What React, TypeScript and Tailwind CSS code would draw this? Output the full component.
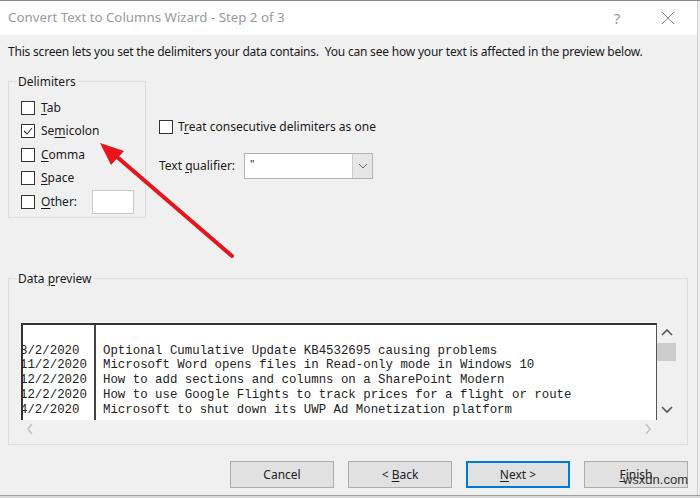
import React from "react";

const ui = { fontFamily: '"Noto Sans", "Open Sans", sans-serif' };
const mono = { fontFamily: '"Liberation Mono", "Courier New", monospace' };

function Box({ checked = false }: { checked?: boolean }) {
  return (
    <span className="w-[14px] h-[14px] border border-[#333] bg-white flex items-center justify-center shrink-0">
      {checked && (
        <svg width="10" height="10" viewBox="0 0 10 10">
          <path d="M1 5 L4 8 L9 2" fill="none" stroke="#333" strokeWidth="1.1" />
        </svg>
      )}
    </span>
  );
}

function Key({ pre = "", k, post = "" }: { pre?: string; k: string; post?: string }) {
  return (
    <span>
      {pre}
      <span className="underline underline-offset-2">{k}</span>
      {post}
    </span>
  );
}

function Check({ label, checked }: { label: React.ReactNode; checked?: boolean }) {
  return (
    <div className="flex items-center gap-[6px] h-[23.5px]">
      <Box checked={checked} />
      {label}
    </div>
  );
}

function Btn({ children, primary }: { children: React.ReactNode; primary?: boolean }) {
  return (
    <button
      className={
        "w-[104px] h-[27px] bg-[#e1e1e1] text-[12px] text-[#222] flex items-center justify-center " +
        (primary ? "border-2 border-[#0078d7]" : "border border-[#adadad]")
      }
    >
      {children}
    </button>
  );
}

const rows = [
  ["3/2/2020", "Optional Cumulative Update KB4532695 causing problems"],
  ["11/2/2020", "Microsoft Word opens files in Read-only mode in Windows 10"],
  ["12/2/2020", "How to add sections and columns on a SharePoint Modern"],
  ["12/2/2020", "How to use Google Flights to track prices for a flight or route"],
  ["4/2/2020", "Microsoft to shut down its UWP Ad Monetization platform"],
];

const Chev = ({ d }: { d: string }) => (
  <svg width="12" height="8" viewBox="0 0 12 8">
    <path d={d} fill="none" stroke="#555" strokeWidth="1.6" />
  </svg>
);

export default function App() {
  return (
    <div
      className="w-[700px] h-[498px] relative overflow-hidden bg-[#f0f0f0] text-[#1a1a1a] border-t border-[#8a8a8a]"
      style={ui}
    >
      {/* title bar */}
      <div className="h-[34px] bg-white flex items-center pl-[8px] border-r border-[#cfcfcf] w-[698px]">
        <span className="text-[13.3px] text-[#9a9a9a] flex-1">Convert Text to Columns Wizard - Step 2 of 3</span>
        <span className="text-[15px] text-[#9a9a9a] w-[20px] text-center mr-[34px]">?</span>
        <svg width="14" height="14" viewBox="0 0 14 14" className="mr-[22px]">
          <path d="M1 1 L13 13 M13 1 L1 13" stroke="#8a8a8a" strokeWidth="1" />
        </svg>
      </div>

      <div className="w-[698px] h-[463px] border-r border-[#cfcfcf] px-[8px]">
        <div className="text-[12px] pt-[9px] leading-[16px] tracking-[-0.2px]">
          This screen lets you set the delimiters your data contains.&nbsp; You can see how your text is affected in the preview below.
        </div>

        <div className="flex mt-[21px] h-[137px]">
          {/* Delimiters group */}
          <div className="relative w-[138px] h-[137px] border border-[#dcdcdc] pl-[12px] pt-[14px] text-[12px]">
            <span className="absolute -top-[9px] left-[7px] px-[2px] bg-[#f0f0f0]">Delimiters</span>
            <Check label={<Key k="T" post="ab" />} />
            <Check label={<Key pre="Se" k="m" post="icolon" />} checked />
            <Check label={<Key k="C" post="omma" />} />
            <Check label={<Key k="S" post="pace" />} />
            <div className="flex items-center h-[23.5px]">
              <Box />
              <span className="ml-[6px] w-[51px]">
                <Key k="O" post="ther:" />
              </span>
              <span className="w-[42px] h-[24px] bg-white border border-[#c8c8c8]" />
            </div>
          </div>

          <div className="ml-[13px] pt-[37px] text-[12px]">
            <div className="flex items-center gap-[5px]">
              <Box />
              <Key pre="T" k="r" post="eat consecutive delimiters as one" />
            </div>
            <div className="flex items-center mt-[17px]">
              <span className="w-[85px]">
                <Key pre="Text " k="q" post="ualifier:" />
              </span>
              <div className="w-[129px] h-[26px] bg-white border border-[#b5b5b5] flex">
                <span className="flex-1 pl-[5px] text-[11px] leading-[20px]">"</span>
                <span className="w-[20px] bg-[#e6e6e6] border-l border-[#cccccc] flex items-center justify-center">
                  <svg width="10" height="6" viewBox="0 0 10 6">
                    <path d="M1 1 L5 5 L9 1" fill="none" stroke="#666" strokeWidth="1" />
                  </svg>
                </span>
              </div>
            </div>
          </div>
        </div>

        {/* Data preview group */}
        <div className="relative mt-[60px] w-[680px] h-[167px] border border-[#dcdcdc] pt-[44px] pl-[12px] text-[12px]">
          <span className="absolute -top-[9px] left-[7px] px-[2px] bg-[#f0f0f0]">
            Data <Key k="p" post="review" />
          </span>
          <div className="flex h-[97px]">
            <div className="w-[636px] bg-white border-l-2 border-t-2 border-r border-[#333] border-r-[#555] overflow-hidden flex pt-[4px]" style={mono}>
              <div className="w-[76px] border-r-2 border-[#444] text-[12.4px] leading-[14.7px] text-[#222] -ml-[3px] -mt-[4px] pt-[4px] whitespace-pre">
                <div>&nbsp;</div>
                {rows.map((r, i) => (
                  <div key={i}>{r[0]}</div>
                ))}
              </div>
              <div className="pl-[7px] text-[12.4px] leading-[14.7px] text-[#222] whitespace-pre">
                <div>&nbsp;</div>
                {rows.map((r, i) => (
                  <div key={i}>{r[1]}</div>
                ))}
              </div>
            </div>
            <div className="w-[19px] flex flex-col items-center">
              <div className="h-[20px] flex items-center justify-center">
                <Chev d="M1 6 L6 1 L11 6" />
              </div>
              <div className="w-[19px] h-[18px] bg-[#cdcdcd]" />
              <div className="flex-1" />
              <div className="h-[20px] flex items-center justify-center">
                <Chev d="M1 1 L6 6 L11 1" />
              </div>
            </div>
          </div>
          <div className="w-[636px] h-[17px] flex items-center justify-between px-[5px]">
            <svg width="8" height="12" viewBox="0 0 8 12">
              <path d="M6 1 L2 6 L6 11" fill="none" stroke="#c2c2c2" strokeWidth="1.5" />
            </svg>
            <svg width="8" height="12" viewBox="0 0 8 12">
              <path d="M2 1 L6 6 L2 11" fill="none" stroke="#c2c2c2" strokeWidth="1.5" />
            </svg>
          </div>
        </div>

        {/* buttons */}
        <div className="flex justify-end gap-[14px] mt-[16px] w-[680px]">
          <Btn>Cancel</Btn>
          <Btn>
            <Key pre="< " k="B" post="ack" />
          </Btn>
          <Btn primary>
            <Key k="N" post="ext >" />
          </Btn>
          <Btn>
            <Key k="F" post="inish" />
          </Btn>
        </div>
      </div>

      <div className="absolute left-0 right-0 bottom-0 h-[3px] bg-[#d9d9d9] border-t border-[#a0a0a0]" />

      <span className="absolute right-[12px] bottom-[9px] text-[13px] text-[#333]" style={{ fontFamily: '"Liberation Sans", sans-serif' }}>
        wsxdn.com
      </span>

      {/* red arrow annotation */}
      <svg className="absolute left-0 top-0 pointer-events-none" width="700" height="498">
        <line x1="232" y1="255" x2="116" y2="155" stroke="#e8141b" strokeWidth="4" strokeLinecap="round" />
        <polygon points="100,142 124,150 111,164" fill="#e8141b" />
      </svg>
    </div>
  );
}
